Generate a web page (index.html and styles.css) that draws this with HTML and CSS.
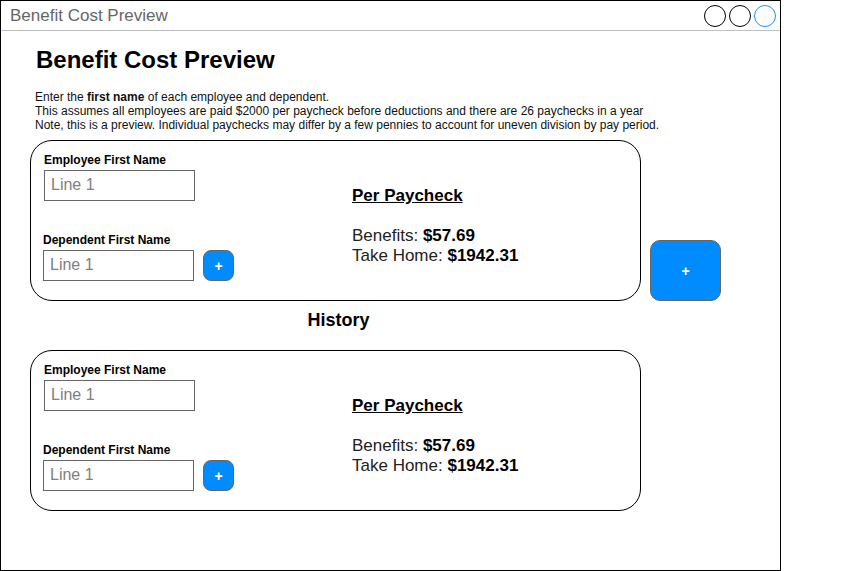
FILE: index.html
```html
<!DOCTYPE html>
<html>
<head>
<meta charset="utf-8">
<link rel="stylesheet" href="styles.css">
</head>
<body>
<div class="window">
  <div class="titlebar">
    <span class="title">Benefit Cost Preview</span>
    <div class="controls">
      <span class="dot"></span><span class="dot"></span><span class="dot blue"></span>
    </div>
  </div>
  <div class="content">
    <h1 class="heading">Benefit Cost Preview</h1>
    <div class="desc">
      <div>Enter the <b>first name</b> of each employee and dependent.</div>
      <div>This assumes all employees are paid $2000 per paycheck before deductions and there are 26 paychecks in a year</div>
      <div>Note, this is a preview. Individual paychecks may differ by a few pennies to account for uneven division by pay period.</div>
    </div>
    <div class="row">
      <div class="card">
        <div class="left">
          <div class="label">Employee First Name</div>
          <div class="input">Line 1</div>
          <div class="label dep">Dependent First Name</div>
          <div class="deprow">
            <div class="input">Line 1</div>
            <div class="plus small">+</div>
          </div>
        </div>
        <div class="right">
          <div class="per">Per Paycheck</div>
          <div class="line">Benefits: <b>$57.69</b></div>
          <div class="line">Take Home: <b>$1942.31</b></div>
        </div>
      </div>
      <div class="plus big">+</div>
    </div>
    <div class="history">History</div>
    <div class="card">
      <div class="left">
        <div class="label">Employee First Name</div>
        <div class="input">Line 1</div>
        <div class="label dep">Dependent First Name</div>
        <div class="deprow">
          <div class="input">Line 1</div>
          <div class="plus small">+</div>
        </div>
      </div>
      <div class="right">
        <div class="per">Per Paycheck</div>
        <div class="line">Benefits: <b>$57.69</b></div>
        <div class="line">Take Home: <b>$1942.31</b></div>
      </div>
    </div>
  </div>
</div>
</body>
</html>
```
FILE: styles.css
```css
html, body {
  margin: 0;
  padding: 0;
  background: #fff;
}
body {
  font-family: "Liberation Sans", Arial, sans-serif;
  color: #000;
}
.window {
  box-sizing: border-box;
  width: 781px;
  height: 571px;
  border: 1px solid #000;
}
.titlebar {
  height: 29px;
  border-bottom: 1px solid #c0c0c0;
  display: flex;
  align-items: center;
  justify-content: space-between;
  padding: 0 4px 0 9px;
}
.title {
  font-size: 17px;
  color: #666;
}
.controls {
  display: flex;
  gap: 3px;
  margin-top: 1px;
}
.dot {
  box-sizing: border-box;
  width: 22px;
  height: 22px;
  border: 1.5px solid #000;
  border-radius: 50%;
}
.dot.blue {
  border-color: #1e90ff;
}
.content {
  padding: 15px 0 0 29px;
}
.heading {
  margin: 0 0 0 6px;
  font-size: 24px;
  line-height: 28px;
  font-weight: bold;
}
.desc {
  margin: 16px 0 0 5px;
  font-size: 12px;
  line-height: 14px;
  color: #111;
}
.row {
  display: flex;
  align-items: flex-end;
  gap: 9px;
  margin-top: 8px;
}
.card {
  box-sizing: border-box;
  width: 611px;
  height: 161px;
  border: 1px solid #000;
  border-radius: 22px;
  display: flex;
}
.left {
  width: 308px;
  padding: 12px 0 0 13px;
  box-sizing: border-box;
}
.label {
  font-size: 12px;
  line-height: 15px;
  font-weight: bold;
  margin-bottom: 2px;
}
.label.dep {
  margin-top: 32px;
  margin-left: -1px;
}
.input {
  box-sizing: border-box;
  width: 151px;
  height: 31px;
  border: 1px solid #666;
  font-size: 16px;
  color: #808080;
  padding: 5px 0 0 6px;
}
.deprow {
  display: flex;
  gap: 9px;
  margin-left: -1px;
}
.plus {
  box-sizing: border-box;
  background: #008cff;
  border: 1px solid #666;
  color: #fff;
  font-weight: bold;
  display: flex;
  align-items: center;
  justify-content: center;
}
.plus.small {
  width: 31px;
  height: 31px;
  border-radius: 8px;
  font-size: 14px;
}
.plus.big {
  width: 71px;
  height: 61px;
  border-radius: 10px;
  font-size: 14px;
}
.right {
  padding: 45px 0 0 13px;
}
.per {
  font-size: 17px;
  line-height: 20px;
  font-weight: bold;
  text-decoration: underline;
  margin-bottom: 20px;
}
.line {
  font-size: 17px;
  line-height: 20px;
  color: #222;
}
.line b {
  color: #000;
}
.history {
  width: 617px;
  text-align: center;
  font-size: 18px;
  font-weight: bold;
  line-height: 20px;
  margin: 9px 0 20px 0;
}
```
